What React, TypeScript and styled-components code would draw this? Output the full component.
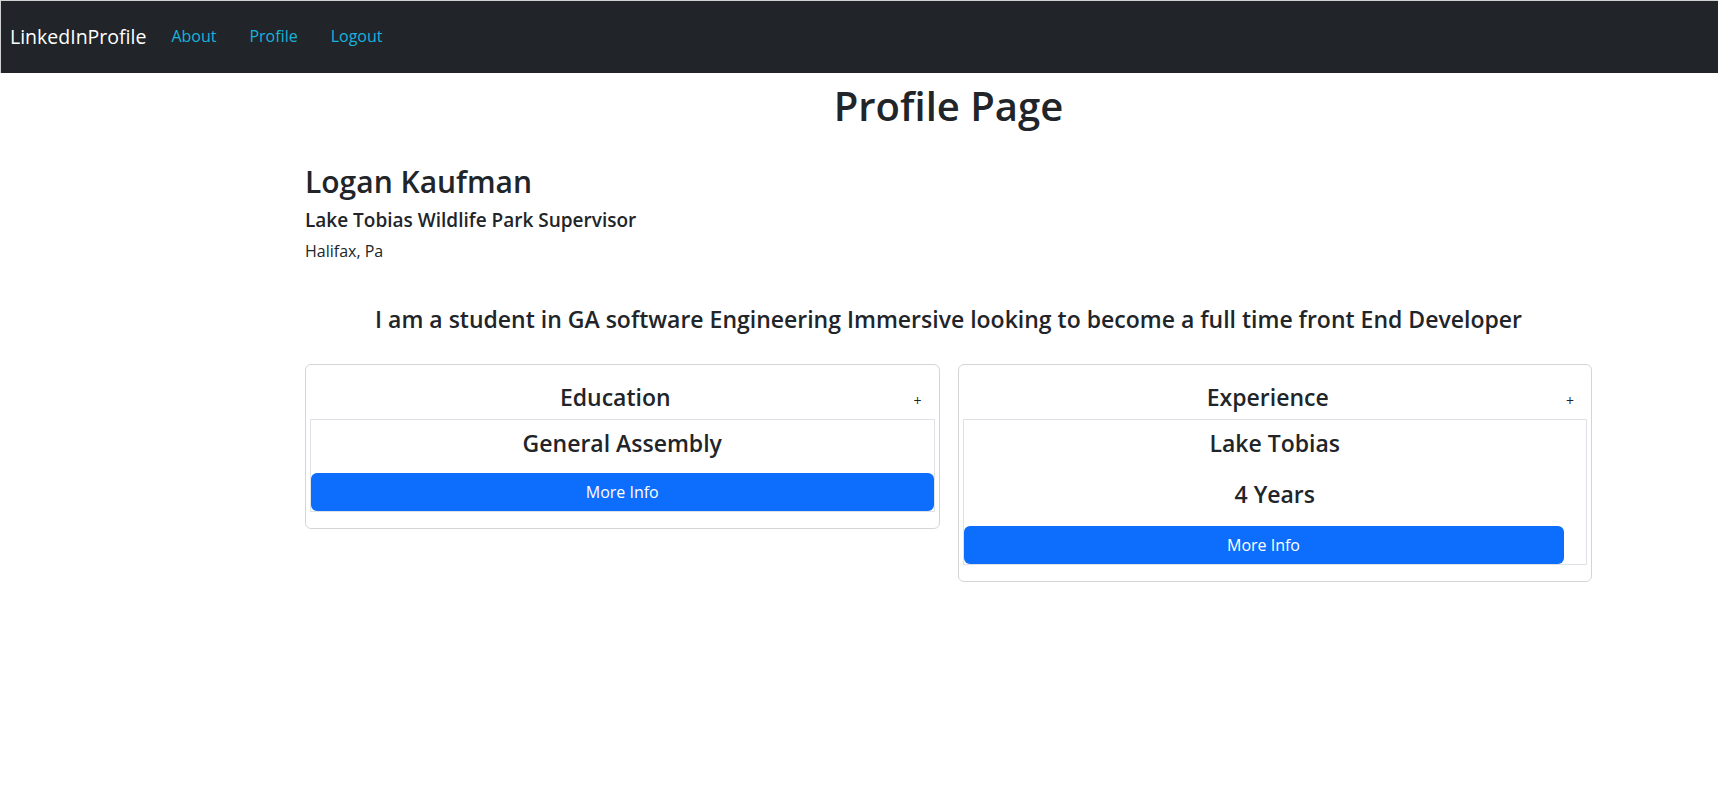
import React from "react";
import styled, { createGlobalStyle } from "styled-components";

const GlobalStyle = createGlobalStyle`
  html, body {
    margin: 0;
    padding: 0;
    background: #ffffff;
  }
  body {
    font-family: "Open Sans", Lato, "Noto Sans", sans-serif;
    color: #212529;
    font-size: 16px;
  }
  * { box-sizing: border-box; }
`;

const NavBar = styled.nav`
  height: 73px;
  background: #212529;
  border-top: 1px solid #d2d2d2;
  border-left: 1px solid #d2d2d2;
  display: flex;
  align-items: center;
  padding-left: 9px;
`;

const Brand = styled.a`
  font-size: 19.5px;
  line-height: 1.2;
  color: #ffffff;
  text-decoration: none;
  margin-right: 25px;
`;

const NavLinks = styled.div`
  display: flex;
  gap: 33px;
`;

const NavLink = styled.a`
  font-size: 16px;
  line-height: 1.2;
  color: #17b3dc;
  text-decoration: none;
`;

const Main = styled.main`
  margin-left: 305px;
  width: 1287px;
  display: flex;
  flex-direction: column;
`;

const PageTitle = styled.h1`
  margin: 9px 0 0;
  font-size: 40px;
  line-height: 1.2;
  font-weight: 600;
  text-align: center;
`;

const Name = styled.h2`
  margin: 34px 0 0;
  font-size: 30px;
  line-height: 1.2;
  font-weight: 600;
`;

const JobTitle = styled.h5`
  margin: 9px 0 0;
  font-size: 19px;
  line-height: 1.2;
  font-weight: 600;
`;

const Location = styled.p`
  margin: 10px 0 0;
  font-size: 16px;
  line-height: 1.2;
`;

const Bio = styled.h4`
  margin: 45px 0 0;
  font-size: 23px;
  line-height: 1.2;
  font-weight: 600;
  text-align: center;
`;

const CardGrid = styled.div`
  margin-top: 30px;
  display: grid;
  grid-template-columns: 1fr 1fr;
  gap: 18px;
  align-items: start;
`;

const Card = styled.section`
  border: 1px solid #d3d6d9;
  border-radius: 6px;
  padding: 0 4px 16px;
  background: #fff;
`;

const CardHeader = styled.div`
  display: flex;
  align-items: flex-end;
  padding: 19px 0 8px;
`;

const CardTitle = styled.h4`
  flex: 1;
  margin: 0;
  padding-left: 8px;
  font-size: 23px;
  line-height: 1.2;
  font-weight: 600;
  text-align: center;
`;

const AddButton = styled.button`
  border: none;
  background: transparent;
  padding: 0;
  margin: 0 12px 1px 0;
  width: 10px;
  font-family: inherit;
  font-size: 14px;
  line-height: 1.2;
  color: #212529;
  cursor: pointer;
`;

const Entry = styled.div<{ $tail: number }>`
  border: 1px solid #dee2e6;
  padding-top: 10px;
  display: flex;
  flex-direction: column;
  align-items: stretch;
  & > h4 {
    margin-bottom: 23px;
  }
  & > h4:last-of-type {
    margin-bottom: ${(p) => p.$tail}px;
  }
`;

const EntryLine = styled.h4`
  margin: 0;
  font-size: 23px;
  line-height: 1.2;
  font-weight: 600;
  text-align: center;
`;

const MoreButton = styled.button<{ $width?: string }>`
  width: ${(p) => p.$width ?? "100%"};
  height: 38px;
  border: none;
  border-radius: 6px;
  background: #0d6efd;
  color: #ffffff;
  font-family: inherit;
  font-size: 16px;
  line-height: 1.5;
  padding: 6px 12px;
  cursor: pointer;
`;

type Section = {
  title: string;
  lines: string[];
  tail: number;
  buttonWidth?: string;
};

const sections: Section[] = [
  { title: "Education", lines: ["General Assembly"], tail: 15 },
  { title: "Experience", lines: ["Lake Tobias", "4 Years"], tail: 18, buttonWidth: "600px" },
];

export default function App() {
  return (
    <>
      <GlobalStyle />
      <NavBar>
        <Brand href="#">LinkedInProfile</Brand>
        <NavLinks>
          <NavLink href="#">About</NavLink>
          <NavLink href="#">Profile</NavLink>
          <NavLink href="#">Logout</NavLink>
        </NavLinks>
      </NavBar>
      <Main>
        <PageTitle>Profile Page</PageTitle>
        <Name>Logan Kaufman</Name>
        <JobTitle>Lake Tobias Wildlife Park Supervisor</JobTitle>
        <Location>Halifax, Pa</Location>
        <Bio>
          I am a student in GA software Engineering Immersive looking to become a full time front End
          Developer
        </Bio>
        <CardGrid>
          {sections.map((s) => (
            <Card key={s.title}>
              <CardHeader>
                <CardTitle>{s.title}</CardTitle>
                <AddButton>+</AddButton>
              </CardHeader>
              <Entry $tail={s.tail}>
                {s.lines.map((l) => (
                  <EntryLine key={l}>{l}</EntryLine>
                ))}
                <MoreButton $width={s.buttonWidth}>More Info</MoreButton>
              </Entry>
            </Card>
          ))}
        </CardGrid>
      </Main>
    </>
  );
}
